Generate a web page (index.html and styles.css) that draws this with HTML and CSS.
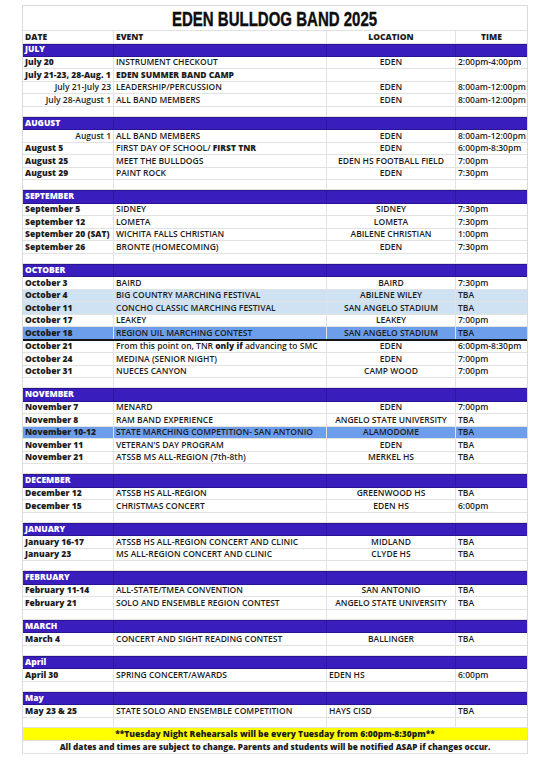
FILE: index.html
```html
<!DOCTYPE html>
<html lang="en">
<head>
<meta charset="utf-8">
<title>Eden Bulldog Band 2025</title>
<link rel="stylesheet" href="styles.css">
</head>
<body>
<div class="sheet">
  <div class="title"><span class="title-text">EDEN BULLDOG BAND 2025</span></div>
  <div class="row head"><div>DATE</div><div>EVENT</div><div class="c">LOCATION</div><div class="c">TIME</div></div>

  <div class="row band"><div>JULY</div><div></div><div></div><div></div></div>
  <div class="row"><div class="d">July 20</div><div>INSTRUMENT CHECKOUT</div><div class="c">EDEN</div><div>2:00pm-4:00pm</div></div>
  <div class="row"><div class="d">July 21-23, 28-Aug. 1</div><div class="b">EDEN SUMMER BAND CAMP</div><div></div><div></div></div>
  <div class="row"><div class="r">July 21-July 23</div><div>LEADERSHIP/PERCUSSION</div><div class="c">EDEN</div><div>8:00am-12:00pm</div></div>
  <div class="row"><div class="r">July 28-August 1</div><div>ALL BAND MEMBERS</div><div class="c">EDEN</div><div>8:00am-12:00pm</div></div>
  <div class="row gap"><div></div><div></div><div></div><div></div></div>

  <div class="row band"><div>AUGUST</div><div></div><div></div><div></div></div>
  <div class="row"><div class="r">August 1</div><div>ALL BAND MEMBERS</div><div class="c">EDEN</div><div>8:00am-12:00pm</div></div>
  <div class="row"><div class="d">August 5</div><div><span>FIRST DAY OF SCHOOL/&nbsp;</span><span class="b">FIRST TNR</span></div><div class="c">EDEN</div><div>6:00pm-8:30pm</div></div>
  <div class="row"><div class="d">August 25</div><div>MEET THE BULLDOGS</div><div class="c">EDEN HS FOOTBALL FIELD</div><div>7:00pm</div></div>
  <div class="row"><div class="d">August 29</div><div>PAINT ROCK</div><div class="c">EDEN</div><div>7:30pm</div></div>
  <div class="row gap"><div></div><div></div><div></div><div></div></div>

  <div class="row band"><div>SEPTEMBER</div><div></div><div></div><div></div></div>
  <div class="row"><div class="d">September 5</div><div>SIDNEY</div><div class="c">SIDNEY</div><div>7:30pm</div></div>
  <div class="row"><div class="d">September 12</div><div>LOMETA</div><div class="c">LOMETA</div><div>7:30pm</div></div>
  <div class="row"><div class="d">September 20 (SAT)</div><div>WICHITA FALLS CHRISTIAN</div><div class="c">ABILENE CHRISTIAN</div><div>1:00pm</div></div>
  <div class="row"><div class="d">September 26</div><div>BRONTE (HOMECOMING)</div><div class="c">EDEN</div><div>7:30pm</div></div>
  <div class="row gap"><div></div><div></div><div></div><div></div></div>

  <div class="row band"><div>OCTOBER</div><div></div><div></div><div></div></div>
  <div class="row"><div class="d">October 3</div><div>BAIRD</div><div class="c">BAIRD</div><div>7:30pm</div></div>
  <div class="row lb"><div class="d">October 4</div><div>BIG COUNTRY MARCHING FESTIVAL</div><div class="c">ABILENE WILEY</div><div>TBA</div></div>
  <div class="row lb"><div class="d">October 11</div><div>CONCHO CLASSIC MARCHING FESTIVAL</div><div class="c">SAN ANGELO STADIUM</div><div>TBA</div></div>
  <div class="row"><div class="d">October 17</div><div>LEAKEY</div><div class="c">LEAKEY</div><div>7:00pm</div></div>
  <div class="row db thick"><div class="d">October 18</div><div>REGION UIL MARCHING CONTEST</div><div class="c">SAN ANGELO STADIUM</div><div>TBA</div></div>
  <div class="row"><div class="d">October 21</div><div><span>From this point on, TNR&nbsp;</span><span class="b">only if</span><span>&nbsp;advancing to SMC</span></div><div class="c">EDEN</div><div>6:00pm-8:30pm</div></div>
  <div class="row"><div class="d">October 24</div><div>MEDINA (SENIOR NIGHT)</div><div class="c">EDEN</div><div>7:00pm</div></div>
  <div class="row"><div class="d">October 31</div><div>NUECES CANYON</div><div class="c">CAMP WOOD</div><div>7:00pm</div></div>
  <div class="row gap"><div></div><div></div><div></div><div></div></div>

  <div class="row band"><div>NOVEMBER</div><div></div><div></div><div></div></div>
  <div class="row"><div class="d">November 7</div><div>MENARD</div><div class="c">EDEN</div><div>7:00pm</div></div>
  <div class="row"><div class="d">November 8</div><div>RAM BAND EXPERIENCE</div><div class="c">ANGELO STATE UNIVERSITY</div><div>TBA</div></div>
  <div class="row db"><div class="d">November 10-12</div><div>STATE MARCHING COMPETITION- SAN ANTONIO</div><div class="c">ALAMODOME</div><div>TBA</div></div>
  <div class="row"><div class="d">November 11</div><div>VETERAN'S DAY PROGRAM</div><div class="c">EDEN</div><div>TBA</div></div>
  <div class="row"><div class="d">November 21</div><div>ATSSB MS ALL-REGION (7th-8th)</div><div class="c">MERKEL HS</div><div>TBA</div></div>
  <div class="row gap"><div></div><div></div><div></div><div></div></div>

  <div class="row band"><div>DECEMBER</div><div></div><div></div><div></div></div>
  <div class="row"><div class="d">December 12</div><div>ATSSB HS ALL-REGION</div><div class="c">GREENWOOD HS</div><div>TBA</div></div>
  <div class="row"><div class="d">December 15</div><div>CHRISTMAS CONCERT</div><div class="c">EDEN HS</div><div>6:00pm</div></div>
  <div class="row gap"><div></div><div></div><div></div><div></div></div>

  <div class="row band"><div>JANUARY</div><div></div><div></div><div></div></div>
  <div class="row"><div class="d">January 16-17</div><div>ATSSB HS ALL-REGION CONCERT AND CLINIC</div><div class="c">MIDLAND</div><div>TBA</div></div>
  <div class="row"><div class="d">January 23</div><div>MS ALL-REGION CONCERT AND CLINIC</div><div class="c">CLYDE HS</div><div>TBA</div></div>
  <div class="row gap"><div></div><div></div><div></div><div></div></div>

  <div class="row band"><div>FEBRUARY</div><div></div><div></div><div></div></div>
  <div class="row"><div class="d">February 11-14</div><div>ALL-STATE/TMEA CONVENTION</div><div class="c">SAN ANTONIO</div><div>TBA</div></div>
  <div class="row"><div class="d">February 21</div><div>SOLO AND ENSEMBLE REGION CONTEST</div><div class="c">ANGELO STATE UNIVERSITY</div><div>TBA</div></div>
  <div class="row gap"><div></div><div></div><div></div><div></div></div>

  <div class="row band"><div>MARCH</div><div></div><div></div><div></div></div>
  <div class="row"><div class="d">March 4</div><div>CONCERT AND SIGHT READING CONTEST</div><div class="c">BALLINGER</div><div>TBA</div></div>
  <div class="row gap"><div></div><div></div><div></div><div></div></div>

  <div class="row band"><div>April</div><div></div><div></div><div></div></div>
  <div class="row"><div class="d">April 30</div><div>SPRING CONCERT/AWARDS</div><div>EDEN HS</div><div>6:00pm</div></div>
  <div class="row gap"><div></div><div></div><div></div><div></div></div>

  <div class="row band"><div>May</div><div></div><div></div><div></div></div>
  <div class="row"><div class="d">May 23 &amp; 25</div><div>STATE SOLO AND ENSEMBLE COMPETITION</div><div>HAYS CISD</div><div>TBA</div></div>
  <div class="row gap"><div></div><div></div><div></div><div></div></div>

  <div class="full yellow">**Tuesday Night Rehearsals will be every Tuesday from 6:00pm-8:30pm**</div>
  <div class="full foot">All dates and times are subject to change. Parents and students will be notified ASAP if changes occur.</div>
</div>
</body>
</html>
```

FILE: styles.css
```css
* {
  box-sizing: border-box;
}

body {
  margin: 0;
  background: #ffffff;
  font-family: "Open Sans", "Liberation Sans", sans-serif;
  color: #1d1d1d;
}

.sheet {
  margin: 5px 0 0 22px;
  width: 506px;
  border: 1px solid #dadada;
  border-bottom: none;
}

.title {
  height: 25px;
  display: flex;
  align-items: center;
  justify-content: center;
  border-bottom: 1px solid #e2e2e2;
}

.title-text {
  display: inline-block;
  font-family: "Liberation Sans", "DejaVu Sans", sans-serif;
  font-weight: 700;
  font-size: 21px;
  line-height: 1;
  color: #0d0d0d;
  transform: scaleX(0.715);
  white-space: nowrap;
  -webkit-text-stroke: 0.4px #0d0d0d;
}

.row {
  display: grid;
  grid-template-columns: 91px 213px 129px 71px;
  height: 12.5px;
  border-bottom: 1px solid #e2e2e2;
  font-size: 8.5px;
  font-weight: 600;
}

.row > div {
  display: flex;
  align-items: center;
  padding: 0 2px;
  border-right: 1px solid #e2e2e2;
  white-space: nowrap;
  line-height: 1;
  min-width: 0;
}

.row > div:last-child {
  border-right: none;
}

.row .c {
  justify-content: center;
}

.row .r {
  justify-content: flex-end;
}

.d,
.b {
  font-weight: 800;
}

.head {
  height: 12.5px;
  font-weight: 800;
}

.band {
  height: 13.3px;
  background: #3a1dbd;
  color: #ffffff;
  font-weight: 800;
  border-bottom: 1px solid #2a1490;
  box-shadow: inset 0 1px 0 #2a1490;
}

.band > div {
  border-right-color: rgba(0, 0, 0, 0.18);
}

.gap {
  height: 10.2px;
}

.lb {
  background: #cfe2f3;
}

.db {
  background: #6d9eeb;
}

.thick {
  height: 13.5px;
  border-bottom: 2px solid #151515;
}

.full {
  display: flex;
  align-items: center;
  justify-content: center;
  font-size: 8.5px;
  font-weight: 800;
  white-space: nowrap;
  border-bottom: 1px solid #e2e2e2;
  line-height: 1;
}

.yellow {
  height: 13.3px;
  background: #ffff00;
}

.foot {
  height: 12.6px;
  font-size: 8.2px;
}
```
